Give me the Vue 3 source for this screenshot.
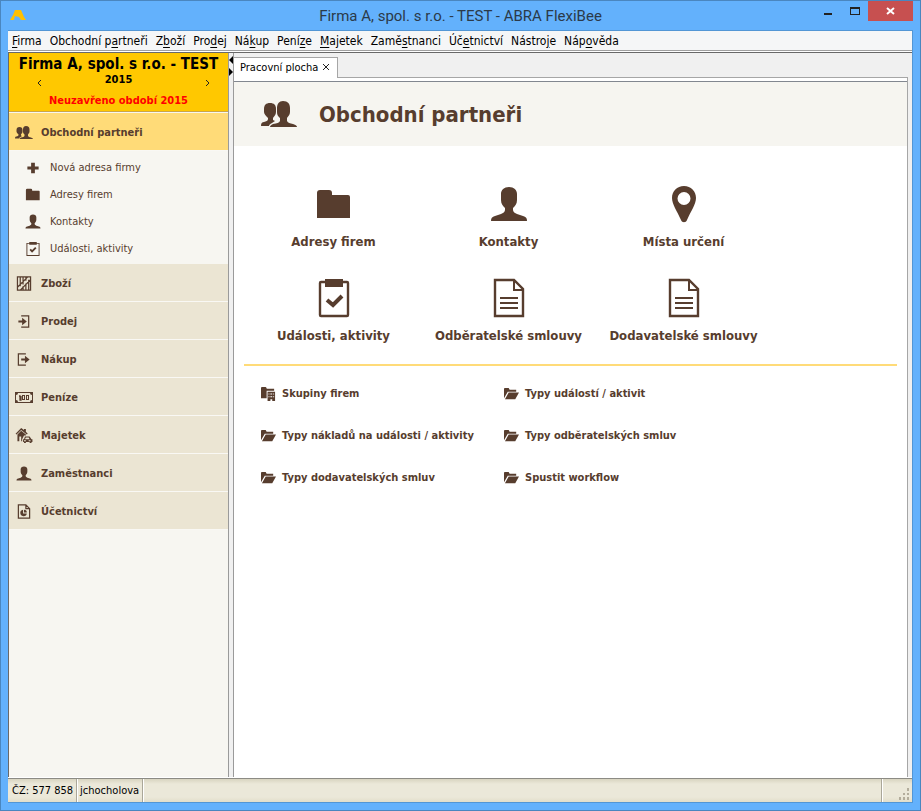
<script setup>
import { ref } from 'vue'

// "_" stands before the letter that is underlined
const menu = ['_Firma', 'Obchodní p_artneři', 'Z_boží', 'Pro_dej', 'Ná_kup', 'Pení_ze', '_Majetek', 'Zamě_stnanci', 'Úč_etnictví', 'Nástro_je', 'Náp_ověda'].map((text) => {
  const [before, rest] = text.split('_')
  return { before, key: rest[0], after: rest.slice(1) }
})

const company = ref('Firma A, spol. s r.o. - TEST')
const year = ref(2015)

const partnerItems = [
  { icon: 'plus', text: 'Nová adresa firmy' },
  { icon: 'folder', text: 'Adresy firem' },
  { icon: 'person', text: 'Kontakty' },
  { icon: 'clipboard-small', text: 'Události, aktivity' },
]

const sections = [
  { icon: 'crate', text: 'Zboží' },
  { icon: 'enter', text: 'Prodej' },
  { icon: 'exit', text: 'Nákup' },
  { icon: 'money', text: 'Peníze' },
  { icon: 'property', text: 'Majetek' },
  { icon: 'person', text: 'Zaměstnanci' },
  { icon: 'report', text: 'Účetnictví' },
]

const tiles = [
  { icon: 'folder', text: 'Adresy firem' },
  { icon: 'person', text: 'Kontakty' },
  { icon: 'pin', text: 'Místa určení' },
  { icon: 'clipboard', text: 'Události, aktivity' },
  { icon: 'document', text: 'Odběratelské smlouvy' },
  { icon: 'document', text: 'Dodavatelské smlouvy' },
]

const links = [
  { icon: 'groups', text: 'Skupiny firem' },
  { icon: 'folder-open', text: 'Typy událostí / aktivit' },
  { icon: 'folder-open', text: 'Typy nákladů na události / aktivity' },
  { icon: 'folder-open', text: 'Typy odběratelských smluv' },
  { icon: 'folder-open', text: 'Typy dodavatelských smluv' },
  { icon: 'folder-open', text: 'Spustit workflow' },
]
</script>

<template>
  <svg class="symbols" aria-hidden="true">
    <symbol id="people" viewBox="0 3 36 30">
      <path d="M9 7c4 0 6 2 6 6v3c0 3-2 4-3 6v2l2 1-3 2c-2 1-3 2-3 3H0c0-3 1-4 3-4 2-1 4-1 4-3v-1c-2-2-4-4-4-6v-3c0-4 2-6 6-6z" />
      <path d="M22 5c5 0 7 3 7 7v4c0 3-2 4-3 6v3c1 2 3 2 6 3 3 1 4 2 4 3H9c0-1 1-2 3-3 4-1 6-1 7-3v-3c-2-2-3-3-3-6v-4c0-4 2-7 6-7z" />
    </symbol>
    <symbol id="person" viewBox="0 0 36 36">
      <path d="M18 1c5 0 8 3 8 7v6c0 4-2 6-4 8v2c0 2 2 3 4 4l6 2c3 1 4 2 4 5H0c0-3 1-4 4-5l6-2c2-1 4-2 4-4v-2c-2-2-4-4-4-8V8c0-4 3-7 8-7z" />
    </symbol>
    <symbol id="folder" viewBox="0 0 36 36">
      <path d="M1 32V7q0-3 3-3h9q3 0 3 3v2h16q2 0 2 2v21z" />
    </symbol>
    <symbol id="pin" viewBox="0 0 40 40">
      <path fill-rule="evenodd" d="M20 2c7 0 12 5 12 12 0 6-5 13-9 22-1 3-5 3-6 0C13 27 8 20 8 14 8 7 13 2 20 2zm0 6a6 6 0 1 0 0 13 6 6 0 0 0 0-13z" />
    </symbol>
    <symbol id="clipboard" viewBox="0 0 40 40">
      <rect x="6" y="4" width="28" height="34" rx="1" class="line bold" />
      <path d="M11 1h18v8H11z" />
      <path d="M13 22l6 5 9-9" class="line thick" />
    </symbol>
    <symbol id="clipboard-small" viewBox="0 0 16 16">
      <path fill-rule="evenodd" d="M1 2h3V1h8v1h3v14H1zm1 1v12h12V3h-2v1H4V3z" />
      <path d="M5 9l2 2 4-4" class="line" />
    </symbol>
    <symbol id="document" viewBox="0 0 40 40">
      <path d="M6 2h19l9 9v27H6z" class="line bold" />
      <path d="M25 3v9h8M11 20h18M11 25h18M11 30h18" class="line" />
    </symbol>
    <symbol id="plus" viewBox="0 0 16 16">
      <path d="M6 3h4v4h4v3h-4v4H6v-4H2V7h4z" />
    </symbol>
    <symbol id="crate" viewBox="0 0 16 16">
      <path d="M1 1h14v14H1zM4 1v10M7 1v8M10 1v4M13 4v11M10 8v7M7 11v4M1 12L12 1M4 15L15 4" class="line hair" />
    </symbol>
    <symbol id="enter" viewBox="0 0 16 16">
      <path d="M5 2h8v12H5" class="line hair" />
      <path d="M2 7h4V4l5 4-5 4V9H2z" />
    </symbol>
    <symbol id="exit" viewBox="0 0 16 16">
      <path d="M10 2H2v12h8" class="line hair" />
      <path d="M5 7h4V4l5 4-5 4V9H5z" />
    </symbol>
    <symbol id="money" viewBox="0 0 18 15">
      <path fill-rule="evenodd" d="M0 2h18v11H0zM3 3q0 2-2 2v5q2 0 2 2h12q0-2 2-2V5q-2 0-2-2z" />
      <path d="M4 6h1v4h1v-4" class="line hair" />
      <path fill-rule="evenodd" d="M7 5h3v5H7zm1 1v3h1V6zM11 5h3v5h-3zm1 1v3h1V6z" />
    </symbol>
    <symbol id="property" viewBox="0 0 18 16">
      <path d="M0 6l6-6 3 2V1h2v3l2 2-1 1-6-5-5 5zM2 7l4-4 5 4v1H9l-2 4v2H6V9H4v5H2z" />
      <path fill-rule="evenodd" d="M10 9h5l2 3h1v3h-1v1h-2v-1h-4v1H9v-1H8v-3h1zm1 1l-1 2h5l-1-2zM9 13v1h2v-1zm5 0v1h2v-1z" />
    </symbol>
    <symbol id="report" viewBox="0 0 16 16">
      <path d="M2 1h8l4 4v10H2zM10 1v4h4" class="line hair" />
      <path d="M7 6v4h4a3.500 3.500 0 1 1-4-4zM8 6q3 0 3 3H8z" />
    </symbol>
    <symbol id="folder-open" viewBox="0 0 16 16">
      <path d="M0 13V3q0-1 1-1h4l1 2h7v2H4zM5 7h11l-4 7H1z" />
    </symbol>
    <symbol id="groups" viewBox="0 0 16 16">
      <path fill-rule="evenodd" d="M0 13V2q0-1 1-1h4l1 1v1h8v2H6v8zM7 6h8v10h-3v-2h-2v2H7zM8 8v1h1V8zM10 8v1h2V8zM13 8v1h1V8zM8 11v1h1v-1zM10 11v1h2v-1zM13 11v1h1v-1z" />
    </symbol>
  </svg>

  <div class="window">
    <header class="titlebar">
      <svg class="logo" viewBox="0 0 16 12"><path d="M5 1h6l3 7 2 3h-5l-2-3-4-1-1 4H0l3-5z" /></svg>
      <h1>{{ company }} - ABRA FlexiBee</h1>
      <div class="controls">
        <button aria-label="Minimalizovat"><svg viewBox="0 0 10 10"><path d="M1 7h8v2H1z" /></svg></button>
        <button aria-label="Maximalizovat"><svg viewBox="0 0 10 10"><path fill-rule="evenodd" d="M0 1h10v8H0zm1 2v5h8V3z" /></svg></button>
        <button class="close" aria-label="Zavřít"><svg viewBox="0 0 10 10"><path d="M1 2l7 6M8 2L1 8" /></svg></button>
      </div>
    </header>

    <div class="client">
      <nav class="menubar">
        <button v-for="item in menu" :key="item.before + item.key">{{ item.before }}<u>{{ item.key }}</u>{{ item.after }}</button>
      </nav>

      <div class="workspace">
        <aside class="sidebar">
          <div class="company">
            <strong class="name">{{ company }}</strong>
            <div class="period">
              <button aria-label="Předchozí období" @click="year--"><svg viewBox="0 0 6 8"><path d="M5 1L2 4l3 3" /></svg></button>
              <strong>{{ year }}</strong>
              <button aria-label="Další období" @click="year++"><svg viewBox="0 0 6 8"><path d="M1 1l3 3-3 3" /></svg></button>
            </div>
            <strong class="warning">Neuzavřeno období {{ year }}</strong>
          </div>
          <a href="#" class="section active"><svg class="icon"><use href="#people" /></svg>Obchodní partneři</a>
          <div class="subitems">
            <a v-for="item in partnerItems" :key="item.text" href="#"><svg class="icon"><use :href="'#' + item.icon" /></svg>{{ item.text }}</a>
          </div>
          <a v-for="item in sections" :key="item.text" href="#" class="section"><svg class="icon"><use :href="'#' + item.icon" /></svg>{{ item.text }}</a>
        </aside>

        <div class="splitter">
          <svg viewBox="0 0 4 22"><path d="M4 0v8L0 4zM0 12v8l4-4z" /></svg>
        </div>

        <main class="desktop">
          <div class="tabs">
            <div class="tab">
              <span>Pracovní plocha</span>
              <button aria-label="Zavřít záložku"><svg viewBox="0 0 8 8"><path d="M1 1l6 6M7 1L1 7" /></svg></button>
            </div>
            <div class="rest"></div>
          </div>
          <div class="pane">
            <div class="heading">
              <svg class="big"><use href="#people" /></svg>
              <h2>Obchodní partneři</h2>
            </div>
            <div class="tiles">
              <a v-for="tile in tiles" :key="tile.text" href="#" class="tile">
                <svg :class="tile.icon"><use :href="'#' + tile.icon" /></svg>
                <span>{{ tile.text }}</span>
              </a>
            </div>
            <hr>
            <div class="links">
              <a v-for="link in links" :key="link.text" href="#"><svg><use :href="'#' + link.icon" /></svg>{{ link.text }}</a>
            </div>
          </div>
        </main>
      </div>

      <footer class="statusbar">
        <span>ČZ: 577 858</span>
        <span class="user">jchocholova</span>
        <span class="space"></span>
        <svg class="grip" viewBox="0 0 12 14"><path d="M9 1h2v3H9zM5 6h2v2H5zM9 6h2v2H9zM1 10h2v3H1zM5 10h2v3H5zM9 10h2v3H9z" /></svg>
      </footer>
    </div>
  </div>
</template>

<style>
body {
  margin: 0;
}
</style>

<style scoped>
* {
  box-sizing: border-box;
}

.symbols {
  position: absolute;
  width: 0;
  height: 0;
}
.line {
  fill: none;
  stroke: #573d2e;
  stroke-width: 2px;
}
.bold {
  stroke-width: 2.4px;
}
.thick {
  stroke-width: 4px;
}
.hair {
  stroke-width: 1.3px;
}

button {
  border: 0;
  padding: 0;
  background: none;
  font: inherit;
  color: inherit;
}
a {
  color: #573d2e;
  text-decoration: none;
}
svg {
  flex: none;
  fill: #573d2e;
}

.window {
  display: flex;
  flex-direction: column;
  min-height: 100vh;
  padding: 0 7px 7px;
  border: 1px solid #4a86bf;
  background: #63b1fc;
  font-family: 'DejaVu Sans Condensed', 'Noto Sans', sans-serif;
  font-size: 11px;
  color: #000;
}

.titlebar {
  display: grid;
  grid-template-columns: 110px 1fr 110px;
  height: 29px;
}
.titlebar h1 {
  margin: 0;
  font: 15px/30px Roboto, 'Open Sans', sans-serif;
  text-align: center;
  color: #2b3a49;
}
.logo {
  width: 16px;
  height: 12px;
  margin: 8px 2px;
  fill: #ffc000;
}
.controls {
  display: flex;
  justify-content: flex-end;
  height: 20px;
}
.controls button {
  width: 27px;
  padding-top: 2px;
}
.controls svg {
  width: 10px;
  height: 10px;
  fill: #222;
}
.controls .close {
  width: 45px;
  background: #c75050;
}
.close path {
  stroke: #fff;
  stroke-width: 2px;
}

.client {
  display: flex;
  flex-direction: column;
  flex: 1;
  border: 1px solid #5296d5;
  border-width: 1px 1px 1px 0;
  background: #fff;
}

.menubar {
  display: flex;
  gap: 8px;
  height: 20px;
  padding: 0 4px;
  border-bottom: 1px solid #a0a0a0;
  background: #f5f6f7;
  font-size: 12px;
}
u {
  text-underline-offset: 2px;
}

.workspace {
  display: flex;
  flex: 1;
  margin-top: 1px;
  border-top: 1px solid #696969;
  border-left: 1px solid #696969;
  background: #f0f0f0;
}

.sidebar {
  width: 219px;
  background: #f7f6f1;
}
.company {
  display: flex;
  flex-direction: column;
  align-items: center;
  height: 59px;
  margin-bottom: 1px;
  padding-top: 2px;
  border-bottom: 1px solid #c9a54a;
  background: #ffc800;
}
.name {
  font-size: 15px;
  line-height: 18px;
}
.period {
  display: flex;
  justify-content: space-between;
  align-items: flex-end;
  align-self: stretch;
  height: 14px;
  padding: 0 17px 0 27px;
  line-height: 14px;
}
.period strong {
  padding-right: 10px;
}
.period svg {
  display: block;
  width: 6px;
  height: 8px;
}
.period path,
.tab path {
  fill: none;
  stroke: #222;
}
.warning {
  line-height: 28px;
  color: #f00;
}

.section {
  display: flex;
  align-items: center;
  gap: 8px;
  height: 38px;
  padding: 2px 0 0 6px;
  border-bottom: 1px solid #f9f8f4;
  background: #ebe5d3;
  font-weight: bold;
}
.section.active {
  background: #ffdb78;
}
.section .icon {
  width: 18px;
  height: 15px;
}
.subitems {
  padding: 3px 0 2px;
}
.subitems a {
  display: flex;
  align-items: center;
  gap: 9px;
  height: 27px;
  padding-left: 16px;
}
.subitems .icon {
  width: 16px;
  height: 15px;
}

.splitter {
  width: 6px;
  padding-top: 3px;
  border: 1px solid #9a9a9a;
  border-width: 0 1px;
}
.splitter svg {
  display: block;
  width: 4px;
  height: 22px;
  fill: #000;
}

.desktop {
  display: flex;
  flex-direction: column;
  flex: 1;
  padding-right: 4px;
}
.tabs {
  display: flex;
  height: 25px;
  padding-top: 4px;
}
.tab {
  display: flex;
  align-items: center;
  gap: 4px;
  padding: 0 7px 2px 6px;
  border: 1px solid #a6a6a6;
  border-width: 1px 1px 0 0;
  background: #fff;
}
.tab svg {
  display: block;
  width: 8px;
  height: 8px;
}
.rest {
  flex: 1;
  border-bottom: 1px solid #a6a6a6;
}
.pane {
  flex: 1;
  padding-top: 3px;
  border-right: 1px solid #a6a6a6;
  background: #fff;
}
.heading {
  display: flex;
  align-items: center;
  gap: 22px;
  height: 65px;
  padding-left: 27px;
  border-top: 1px solid #828790;
  background: #f6f5f0;
}
.heading h2 {
  margin: 0;
  font-size: 22px;
  color: #573d2e;
}
.big {
  width: 36px;
  height: 36px;
}

.tiles {
  display: grid;
  grid-template-columns: repeat(3, 175px);
  grid-auto-rows: 94px;
  padding: 38px 12px 0;
}
.tile {
  display: flex;
  flex-direction: column;
  align-items: center;
  font-size: 13px;
  font-weight: bold;
}
.tile svg {
  width: 40px;
  height: 40px;
}
.tile .person,
.tile .folder {
  width: 36px;
  height: 36px;
  margin: 2px 0;
}
.tile span {
  line-height: 36px;
  white-space: nowrap;
}
hr {
  height: 2px;
  margin: -8px 10px 0;
  border: 0;
  background: #ffdb78;
}
.links {
  display: grid;
  grid-template-columns: 243px 243px;
  grid-auto-rows: 42px;
  padding: 6px 27px;
  font-weight: bold;
}
.links a {
  display: flex;
  align-items: center;
  gap: 6px;
  white-space: nowrap;
}
.links svg {
  width: 15px;
  height: 15px;
}

.statusbar {
  display: flex;
  height: 24px;
  margin-top: 1px;
  padding-left: 1px;
  border-top: 1px solid #8c8b84;
  background: linear-gradient(#d8d4c0, #ebe8d9 5px, #ebe8d9 18px, #e2deca);
  line-height: 23px;
}
.statusbar span {
  padding: 0 3px;
  border-right: 1px solid #aaa799;
  box-shadow: 1px 0 #fff;
}
.statusbar .space {
  flex: 1;
}
.grip {
  align-self: flex-end;
  width: 12px;
  height: 14px;
  margin: 0 2px 1px 16px;
  fill: #b3ad9c;
}
</style>
